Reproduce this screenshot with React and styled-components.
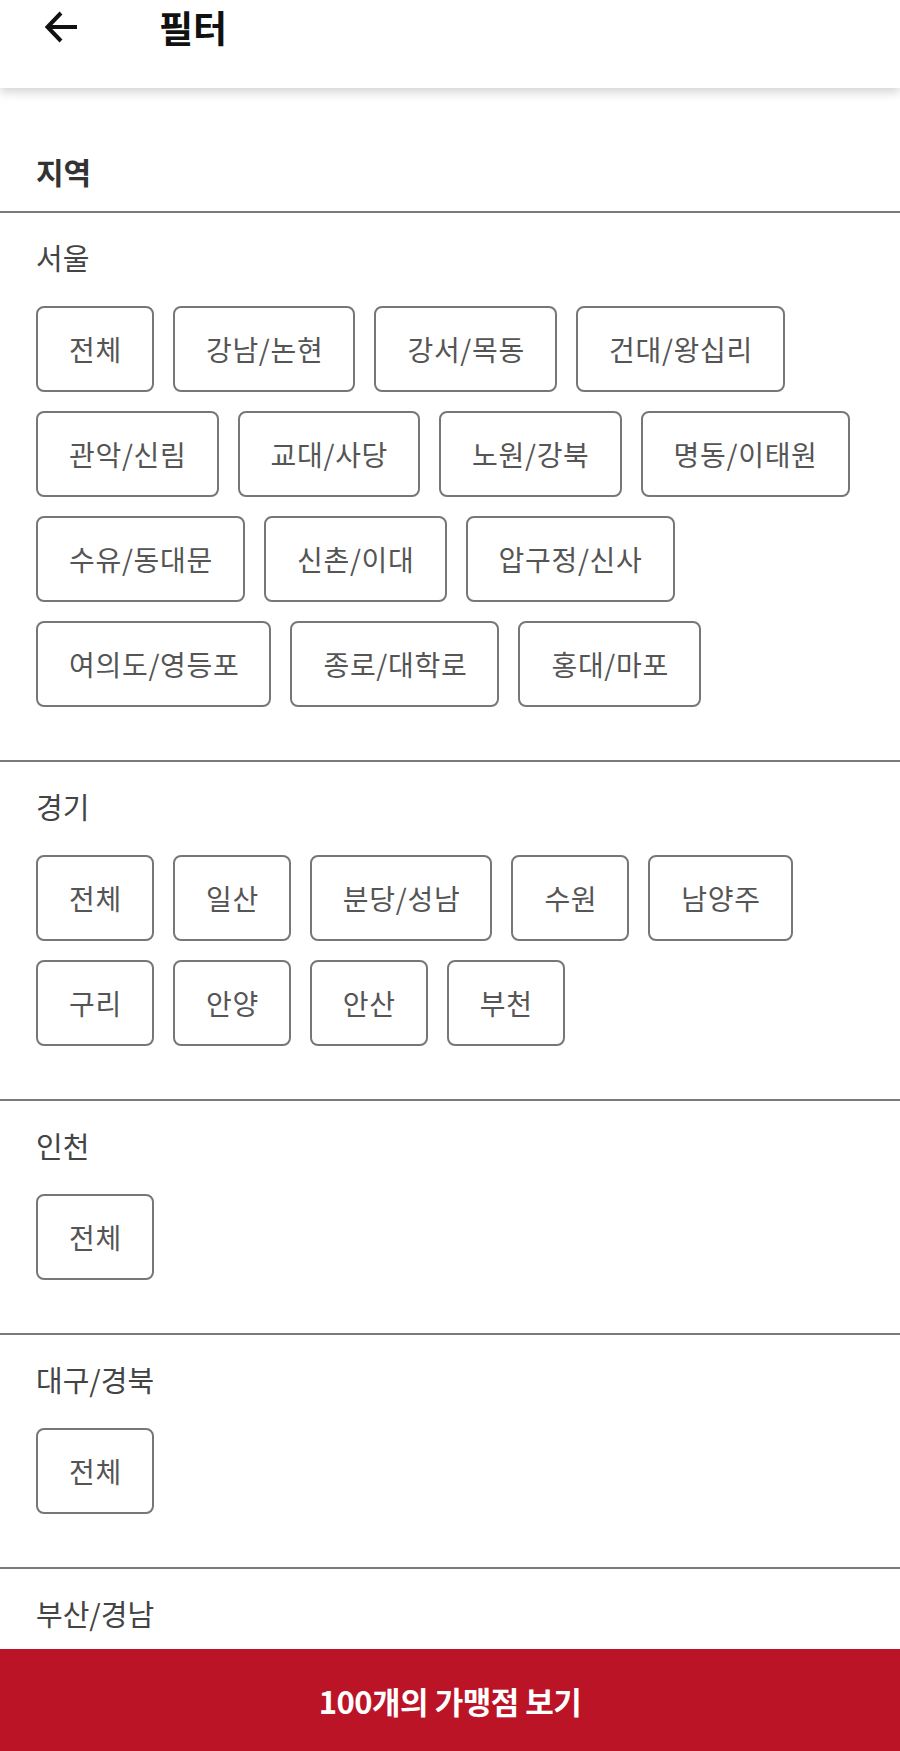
import styled, { createGlobalStyle } from "styled-components";

const regions = [
    {
        name: "서울",
        areas: [
            "전체", "강남/논현", "강서/목동", "건대/왕십리", "관악/신림", "교대/사당",
            "노원/강북", "명동/이태원", "수유/동대문", "신촌/이대", "압구정/신사",
            "여의도/영등포", "종로/대학로", "홍대/마포",
        ],
    },
    {
        name: "경기",
        areas: ["전체", "일산", "분당/성남", "수원", "남양주", "구리", "안양", "안산", "부천"],
    },
    { name: "인천", areas: ["전체"] },
    { name: "대구/경북", areas: ["전체"] },
    { name: "부산/경남", areas: [] },
];

const Filter = () => {
    return (
        <Page>
            <GlobalStyle />
            <Header>
                <BackButton aria-label="back">
                    <svg width="36" height="36" viewBox="0 0 36 36" fill="none">
                        <path d="M33 18H4M17 4L3.5 18L17 32" stroke="#111" strokeWidth="4" strokeLinecap="butt" strokeLinejoin="miter" />
                    </svg>
                </BackButton>
                <Title>필터</Title>
            </Header>

            <Content>
                <SectionTitle>지역</SectionTitle>
                {regions.map((region) => (
                    <Region key={region.name}>
                        <RegionName>{region.name}</RegionName>
                        {region.areas.length > 0 && (
                            <ChipList>
                                {region.areas.map((area) => (
                                    <Chip key={area}>{area}</Chip>
                                ))}
                            </ChipList>
                        )}
                    </Region>
                ))}
            </Content>

            <SubmitBar>100개의 가맹점 보기</SubmitBar>
        </Page>
    );
};

export default Filter;

const GlobalStyle = createGlobalStyle`
    * {
        box-sizing: border-box;
    }
    html, body {
        margin: 0;
        padding: 0;
        background: #fff;
        font-family: "Noto Sans CJK KR", "Noto Sans", sans-serif;
    }
`;

const Page = styled.div`
    position: relative;
    width: 900px;
    height: 1751px;
    overflow: hidden;
    background: #fff;
`;

const Header = styled.header`
    position: relative;
    z-index: 1;
    display: flex;
    align-items: flex-start;
    height: 88px;
    padding: 4px 0 0 44px;
    background: #fff;
    box-shadow: 0 4px 10px rgba(0, 0, 0, 0.18);
`;

const BackButton = styled.button`
    display: flex;
    align-items: center;
    justify-content: center;
    width: 36px;
    height: 46px;
    padding: 0;
    border: none;
    background: none;
`;

const Title = styled.h1`
    margin: 0 0 0 79px;
    font-size: 37px;
    font-weight: 700;
    line-height: 46px;
    color: #111;
`;

const Content = styled.main`
    padding-top: 63px;
`;

const SectionTitle = styled.h2`
    margin: 0;
    padding: 0 36px 20px;
    font-size: 30px;
    font-weight: 700;
    line-height: 40px;
    color: #333;
`;

const Region = styled.section`
    padding: 24px 36px 53px;
    border-top: 2px solid #7a7a7a;
`;

const RegionName = styled.h3`
    margin: 0 0 29px;
    font-size: 29px;
    font-weight: 400;
    line-height: 40px;
    color: #444;
`;

const ChipList = styled.div`
    display: flex;
    flex-wrap: wrap;
    gap: 19px 19px;
`;

const Chip = styled.button`
    height: 86px;
    padding: 0 30px 0 31px;
    border: 2px solid #777;
    border-radius: 8px;
    background: #fff;
    font-family: inherit;
    font-size: 28px;
    font-weight: 400;
    letter-spacing: 0.7px;
    color: #555;
`;

const SubmitBar = styled.button`
    position: absolute;
    left: 0;
    right: 0;
    bottom: 0;
    height: 102px;
    border: none;
    background: #bc1427;
    font-family: inherit;
    font-size: 31px;
    font-weight: 700;
    color: #fff;
    letter-spacing: -0.5px;
`;
